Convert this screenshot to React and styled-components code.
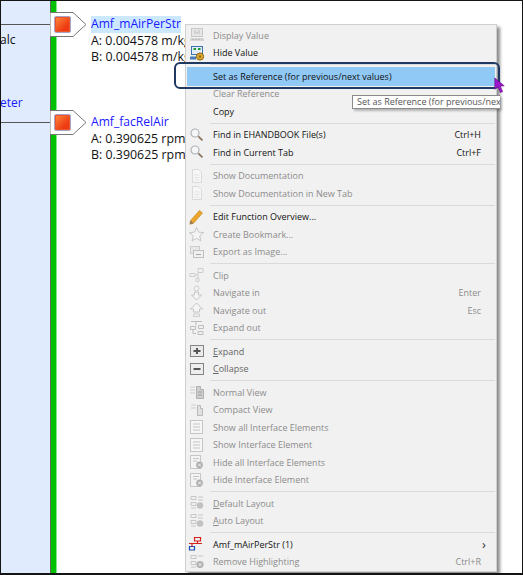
import styled, { createGlobalStyle } from "styled-components";

const GlobalStyle = createGlobalStyle`
  html, body { margin: 0; padding: 0; background: #fff; }
  body { font-family: "Open Sans", "Noto Sans", sans-serif; }
`;

const disabled = "#8c8c8c";

const IconBase = ({ children }) => (
  <svg width="18" height="16" viewBox="0 0 18 16" fill="none">
    {children}
  </svg>
);

const Icons = {
  value: (
    <IconBase>
      <rect x="3.5" y="1.5" width="11" height="8" fill="#e6e6e6" stroke="#c8c8c8" />
      <path d="M6 4h2M10 4h2M6 6h6" stroke="#bdbdbd" />
      <path d="M2 11h14v3H2z" fill="#d6d6d6" />
      <path d="M4 12.5h10" stroke="#bcbcbc" strokeDasharray="2 1" />
    </IconBase>
  ),
  hide: (
    <IconBase>
      <rect x="3.5" y="1.5" width="11" height="8" fill="#e3edf7" stroke="#3f73ab" />
      <path d="M5.5 4h2.5M10 4h2.5" stroke="#1e9a3a" strokeWidth="2" />
      <path d="M2 11.5h6v3H2z" fill="#4a7db5" />
      <circle cx="12" cy="11.5" r="3.6" fill="#e2ac33" stroke="#866412" />
      <circle cx="12" cy="11.5" r="1.2" fill="#8a6a18" />
    </IconBase>
  ),
  search: (
    <IconBase>
      <circle cx="7" cy="6" r="4" fill="#f6f6f6" stroke="#adb4ba" strokeWidth="1.2" />
      <path d="M10.3 9.3l4.2 4" stroke="#8c7560" strokeWidth="1.8" />
    </IconBase>
  ),
  doc: (
    <IconBase>
      <path d="M4.5 1.5h6l3 3v10h-9z" fill="#f6f6f6" stroke="#dadada" />
      <path d="M6.5 7h5M6.5 9.5h5M6.5 12h5" stroke="#e4e4e4" />
    </IconBase>
  ),
  pencil: (
    <IconBase>
      <path d="M2.5 11.5L11.5 1.5l3 2.5-9 10.2-3.6 1z" fill="#eda52a" stroke="#c08a2a" strokeWidth="0.7" />
      <path d="M2.5 11.5l3 2.7-3.6 1z" fill="#8d7a60" />
    </IconBase>
  ),
  star: (
    <IconBase>
      <path d="M8.5 1.5l2 4.6 5 .5-3.8 3.3 1.1 5-4.3-2.6-4.3 2.6 1.1-5L1.5 6.6l5-.5z" fill="#f5f5f5" stroke="#c6c6c6" />
    </IconBase>
  ),
  image: (
    <IconBase>
      <rect x="2.5" y="2.5" width="9" height="7" fill="#e8e8e8" stroke="#cdcdcd" />
      <rect x="5.5" y="6.5" width="10" height="7" fill="#f0f0f0" stroke="#c0c0c0" />
      <path d="M8 10.5h5" stroke="#a8a8a8" />
    </IconBase>
  ),
  clip: (
    <IconBase>
      <path d="M10 1.5h5v4h-5zM2 6.5h5v3H2zM8 11.5h3v3H8zM10 5.5v6M7 8h3" stroke="#cdcdcd" />
    </IconBase>
  ),
  navIn: (
    <IconBase>
      <path d="M8.5 15l-5-5h3V7h4v3h3z" fill="#f4f4f4" stroke="#c6c6c6" />
      <circle cx="8.5" cy="3.5" r="2.5" stroke="#cdcdcd" />
    </IconBase>
  ),
  navOut: (
    <IconBase>
      <path d="M8.5 1l6 6h-3v3h-6V7h-3z" fill="#f4f4f4" stroke="#c6c6c6" />
      <path d="M5.5 12h6v2.5h-6z" stroke="#cdcdcd" />
    </IconBase>
  ),
  tree: (
    <IconBase>
      <path d="M3 1.5h11M8 1.5v4M2.5 6.5h5v3h-5zM10.5 5.5h5v3h-5zM5 9.5v4h3M10 11.5h5v3h-5z" stroke="#bdbdbd" />
    </IconBase>
  ),
  plus: (
    <IconBase>
      <rect x="2.5" y="2.5" width="13" height="11" fill="#e9e9e9" stroke="#858585" />
      <path d="M5.5 8h7M9 5v6" stroke="#555" strokeWidth="2" />
    </IconBase>
  ),
  minus: (
    <IconBase>
      <rect x="2.5" y="2.5" width="13" height="11" fill="#ededed" stroke="#858585" />
      <path d="M5.5 8h7" stroke="#555" strokeWidth="2" />
    </IconBase>
  ),
  viewA: (
    <IconBase>
      <path d="M2 3h5M2 6h5M2 9h5" stroke="#cdcdcd" />
      <path d="M8.5 2.5h4v3h3v9h-7z" fill="#cecece" stroke="#b0b0b0" />
      <path d="M10 8h4M10 11h4" stroke="#9c9c9c" />
    </IconBase>
  ),
  viewB: (
    <IconBase>
      <path d="M3 3h5M3 6h5" stroke="#cdcdcd" />
      <path d="M9.5 3.5h3v3h2v7h-5z" fill="#e0e0e0" stroke="#b8b8b8" />
    </IconBase>
  ),
  list: (
    <IconBase>
      <rect x="2.5" y="1.5" width="12" height="13" fill="#f6f6f6" stroke="#c6c6c6" />
      <path d="M5 5h7M5 8h7M5 11h7" stroke="#c4c4c4" />
    </IconBase>
  ),
  listHide: (
    <IconBase>
      <rect x="2.5" y="1.5" width="10" height="13" fill="#f4f4f4" stroke="#c6c6c6" />
      <path d="M5 4.5h6M5 7h4" stroke="#c4c4c4" />
      <circle cx="11.5" cy="11" r="3.4" fill="#b0b0b0" />
      <path d="M10 9.5l3 3M13 9.5l-3 3" stroke="#efefef" />
    </IconBase>
  ),
  layout: (
    <IconBase>
      <path d="M3 1.5h5v3H3zM3 7.5h5v3H3zM10 2h5M10 5h5M3 13h5" stroke="#c6c6c6" />
      <circle cx="12" cy="10.5" r="3.2" fill="#c2c2c2" />
    </IconBase>
  ),
  highlight: (
    <IconBase>
      <path d="M6.5 1.5h6v3.5h-6z" stroke="#d5211c" strokeWidth="1.2" />
      <path d="M1.5 10.5h5v3.5h-5z" stroke="#1a4fb5" strokeWidth="1.2" />
      <path d="M1 7.5h13M4 7.5v3M9.5 5v2.5" stroke="#d5211c" strokeWidth="1.2" />
    </IconBase>
  ),
  remove: (
    <IconBase>
      <path d="M3 1.5h5v3H3zM3 7.5h5v3H3zM10 2h5M3 13h5" stroke="#c6c6c6" />
      <circle cx="12" cy="10.5" r="3.6" fill="#b0b0b0" />
      <path d="M10.5 9l3 3M13.5 9l-3 3" stroke="#efefef" />
    </IconBase>
  ),
};

const groups = [
  [
    { label: "Display Value", icon: "value", off: true },
    { label: "Hide Value", icon: "hide" },
  ],
  [
    { label: "Set as Reference (for previous/next values)", active: true },
    { label: "Clear Reference", off: true },
    { label: "Copy" },
  ],
  [
    { label: "Find in EHANDBOOK File(s)", icon: "search", keys: "Ctrl+H" },
    { label: "Find in Current Tab", icon: "search", keys: "Ctrl+F" },
  ],
  [
    { label: "Show Documentation", icon: "doc", off: true },
    { label: "Show Documentation in New Tab", icon: "doc", off: true },
  ],
  [
    { label: "Edit Function Overview...", icon: "pencil" },
    { label: "Create Bookmark...", icon: "star", off: true },
    { label: "Export as Image...", icon: "image", off: true },
  ],
  [
    { label: "Clip", icon: "clip", off: true },
    { label: "Navigate in", icon: "navIn", off: true, keys: "Enter" },
    { label: "Navigate out", icon: "navOut", off: true, keys: "Esc" },
    { label: "Expand out", icon: "tree", off: true },
  ],
  [
    { label: "Expand", mnemonic: "E", icon: "plus", soft: true },
    { label: "Collapse", mnemonic: "C", icon: "minus", soft: true },
  ],
  [
    { label: "Normal View", icon: "viewA", off: true },
    { label: "Compact View", icon: "viewB", off: true },
    { label: "Show all Interface Elements", icon: "list", off: true },
    { label: "Show Interface Element", icon: "list", off: true },
    { label: "Hide all Interface Elements", icon: "listHide", off: true },
    { label: "Hide Interface Element", icon: "listHide", off: true },
  ],
  [
    { label: "Default Layout", mnemonic: "D", icon: "layout", off: true },
    { label: "Auto Layout", mnemonic: "A", icon: "layout", off: true },
  ],
  [
    { label: "Amf_mAirPerStr (1)", icon: "highlight", submenu: true },
    { label: "Remove Highlighting", icon: "remove", off: true, keys: "Ctrl+R" },
  ],
];

const signals = [
  { name: "Amf_mAirPerStr", a: "A: 0.004578 m/kg", b: "B: 0.004578 m/kg", selected: true },
  { name: "Amf_facRelAir", a: "A: 0.390625 rpm", b: "B: 0.390625 rpm" },
];

const App = () => (
  <>
    <GlobalStyle />
    <Frame>
      <Sidebar>
        <LaneLine />
        <SideText>alc</SideText>
        <SideLink>eter</SideLink>
        <LaneLine />
      </Sidebar>
      <GreenBar />
      <Signals>
        {signals.map((s) => (
          <Signal key={s.name}>
            <Tag>
              <TagShape viewBox="0 0 37 25" width="37" height="25">
                <path d="M0 .5H23L36 12.5 23 24.5H0z" fill="#fff" stroke="#777" />
              </TagShape>
              <RedSquare />
            </Tag>
            <Readout>
              <SignalName $selected={s.selected}>{s.name}</SignalName>
              <Value>{s.a}</Value>
              <Value>{s.b}</Value>
            </Readout>
          </Signal>
        ))}
      </Signals>

      <Menu>
        {groups.map((group, i) => (
          <Group key={i}>
            {group.map((item) => (
              <Row key={item.label} $active={item.active} $off={item.off} $soft={item.soft}>
                <IconSlot>{item.icon && Icons[item.icon]}</IconSlot>
                <Label>
                  {item.mnemonic ? (
                    <>
                      <u>{item.mnemonic}</u>
                      {item.label.slice(1)}
                    </>
                  ) : (
                    item.label
                  )}
                </Label>
                {item.keys && <span>{item.keys}</span>}
                {item.submenu && <Chevron>›</Chevron>}
              </Row>
            ))}
          </Group>
        ))}
      </Menu>

      <Callout />
      <Cursor viewBox="0 0 14 20" width="11" height="16">
        <path d="M1 1l12 10-5 .5 3 7-3 1-3-7-4 3z" fill="#9a16c9" stroke="#5a0a80" strokeWidth="0.7" />
      </Cursor>
      <Tooltip>Set as Reference (for previous/next</Tooltip>
    </Frame>
  </>
);

const Frame = styled.div`
  position: relative;
  box-sizing: border-box;
  width: 523px;
  height: 575px;
  display: flex;
  overflow: hidden;
  background: #fff;
  border: 1px solid #141414;
  border-bottom-width: 2px;
`;

const Sidebar = styled.div`
  width: 49px;
  flex: none;
  padding-top: 23px;
  box-sizing: border-box;
  background: #e0ebfd;
  color: #111;
`;

const LaneLine = styled.div`
  height: 1px;
  background: #555;
`;

const SideText = styled.div`
  height: 70px;
  padding-top: 7px;
  box-sizing: border-box;
  margin-left: -1px;
  line-height: 16px;
  font-size: 12px;
`;

const SideLink = styled.div`
  height: 27px;
  line-height: 16px;
  font-size: 12px;
  color: #1a1aff;
  margin-left: -1px;
`;

const GreenBar = styled.div`
  width: 5px;
  flex: none;
  background: #00c000;
  border-left: 1px solid #5d6b5d;
  border-right: 1px solid #7fe88a;
`;

const Signals = styled.div`
  flex: 1;
  padding-top: 11px;
  display: flex;
  flex-direction: column;
  gap: 44.5px;
`;

const Signal = styled.div`
  display: flex;
  align-items: flex-start;
  margin-left: -7px;
  gap: 4px;
`;

const Tag = styled.div`
  position: relative;
  flex: none;
  width: 37px;
  height: 25px;
  display: flex;
  align-items: center;
  padding-left: 4px;
  box-sizing: border-box;
`;

const TagShape = styled.svg`
  position: absolute;
  left: 0;
  top: 0;
`;

const RedSquare = styled.span`
  position: relative;
  box-sizing: border-box;
  width: 17px;
  height: 17px;
  border-radius: 2px;
  border: 1px solid #a9a1c6;
  background: linear-gradient(135deg, #ff8a3c, #ee3b12 70%);
  box-shadow: inset 0 0 0 1px #e9572a;
`;

const Readout = styled.div`
  padding-top: 4px;
`;

const SignalName = styled.div`
  width: fit-content;
  font-size: 12.1px;
  line-height: 16.5px;
  color: #1a1aff;
  background: ${(p) => (p.$selected ? "#cce8ff" : "transparent")};
`;

const Value = styled.div`
  font-size: 12.4px;
  line-height: 16.5px;
  color: #111;
  white-space: nowrap;
`;

const Menu = styled.div`
  position: absolute;
  left: 184px;
  top: 23px;
  width: 312px;
  height: 548px;
  box-sizing: border-box;
  padding: 1.5px 1px 1px;
  background: #f1f1f1;
  border: 1px solid #cfcfcf;
  box-shadow: 3px 3px 3px rgba(0, 0, 0, 0.45);
  font-size: 9px;
`;

const Group = styled.div`
  border-bottom: 1px solid #dadada;
  margin-left: 23px;
  padding-bottom: 2.5px;
  margin-bottom: 2.5px;

  &:last-child {
    border-bottom: none;
  }
`;

const Row = styled.div`
  display: flex;
  align-items: center;
  height: 17.5px;
  margin-left: -23px;
  padding: 0 14px 0 1px;
  color: ${(p) => (p.$off ? disabled : p.$soft ? "#666" : "#111")};
  white-space: nowrap;
  ${(p) =>
    p.$active &&
    `
    background: #90c8f6;
    height: 19px;
    margin-top: -0.5px;
    margin-bottom: -1px;
  `}
`;

const IconSlot = styled.span`
  width: 25px;
  flex: none;
  display: flex;
`;

const Label = styled.span`
  flex: 1;
`;

const Chevron = styled.span`
  font-size: 13px;
  line-height: 13px;
  color: #333;
  margin-right: -5px;
`;

const Callout = styled.div`
  position: absolute;
  left: 173px;
  top: 61px;
  width: 326px;
  height: 27px;
  box-sizing: border-box;
  border: 2px solid #1f3864;
  border-radius: 6px;
`;

const Cursor = styled.svg`
  position: absolute;
  left: 493px;
  top: 76px;
`;

const Tooltip = styled.div`
  position: absolute;
  left: 351px;
  top: 94px;
  width: 148px;
  height: 14px;
  box-sizing: border-box;
  padding-left: 4px;
  background: #fff;
  border: 1px solid #8a8a8a;
  border-right: none;
  box-shadow: 2px 2px 2px rgba(0, 0, 0, 0.25);
  font-size: 9px;
  line-height: 12px;
  color: #555;
  white-space: nowrap;
  overflow: hidden;
`;

export default App;
